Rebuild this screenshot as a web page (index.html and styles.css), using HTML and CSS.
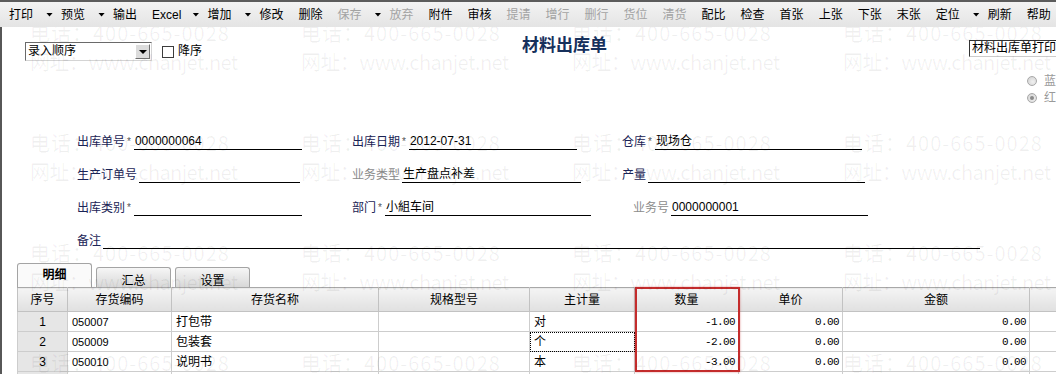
FILE: index.html
```html
<!DOCTYPE html>
<html lang="zh-CN">
<head>
    <meta charset="UTF-8">
    <title>材料出库单</title>
    <link rel="stylesheet" href="styles.css">
</head>
<body>
    <div class="toolbar">
        <span class="tb dd">打印<i class="caret"></i></span>
        <span class="tb dd">预览<i class="caret"></i></span>
        <span class="tb">输出</span>
        <span class="tb dd xl">Excel<i class="caret"></i></span>
        <span class="tb dd">增加<i class="caret"></i></span>
        <span class="tb">修改</span>
        <span class="tb">删除</span>
        <span class="tb dd off">保存<i class="caret"></i></span>
        <span class="tb off">放弃</span>
        <span class="tb">附件</span>
        <span class="tb">审核</span>
        <span class="tb off">提请</span>
        <span class="tb off">增行</span>
        <span class="tb off">删行</span>
        <span class="tb off">货位</span>
        <span class="tb off">清货</span>
        <span class="tb">配比</span>
        <span class="tb">检查</span>
        <span class="tb">首张</span>
        <span class="tb">上张</span>
        <span class="tb">下张</span>
        <span class="tb">末张</span>
        <span class="tb dd">定位<i class="caret"></i></span>
        <span class="tb">刷新</span>
        <span class="tb">帮助</span>
    </div>

    <div class="page">
        <div class="head">
            <div class="sort">
                <div class="select">
                    <span>录入顺序</span>
                    <span class="select-btn"></span>
                </div>
                <span class="chk"></span>
                <span class="chk-label">降序</span>
            </div>
            <h1 class="title">材料出库单</h1>
            <div class="print-box">材料出库单打印</div>
        </div>

        <div class="colors">
            <div class="opt"><span class="radio"></span>蓝</div>
            <div class="opt"><span class="radio on"></span>红</div>
        </div>

        <div class="form">
            <div class="row">
                <div class="field">
                    <span class="lbl">出库单号</span><span class="req">*</span>
                    <span class="val w168">0000000064</span>
                </div>
                <div class="field">
                    <span class="lbl">出库日期</span><span class="req">*</span>
                    <span class="val w168">2012-07-31</span>
                </div>
                <div class="field">
                    <span class="lbl">仓库</span><span class="req">*</span>
                    <span class="val w207">现场仓</span>
                </div>
            </div>
            <div class="row">
                <div class="field">
                    <span class="lbl">生产订单号</span>
                    <span class="val w161"></span>
                </div>
                <div class="field">
                    <span class="lbl dim">业务类型</span>
                    <span class="val w179">生产盘点补差</span>
                </div>
                <div class="field">
                    <span class="lbl">产量</span>
                    <span class="val w217"></span>
                </div>
            </div>
            <div class="row">
                <div class="field">
                    <span class="lbl">出库类别</span><span class="req">*</span>
                    <span class="val w168"></span>
                </div>
                <div class="field">
                    <span class="lbl">部门</span><span class="req">*</span>
                    <span class="val w206">小組车间</span>
                </div>
                <div class="field shift">
                    <span class="lbl dim">业务号</span>
                    <span class="val w197">0000000001</span>
                </div>
            </div>
            <div class="row">
                <div class="field wide">
                    <span class="lbl">备注</span>
                    <span class="val w877"></span>
                </div>
            </div>
        </div>

        <div class="tabs">
            <span class="tab active">明细</span>
            <span class="tab">汇总</span>
            <span class="tab">设置</span>
        </div>

        <div class="grid-wrap">
            <table class="grid">
                <colgroup>
                    <col class="c-no">
                    <col class="c-code">
                    <col class="c-name">
                    <col class="c-spec">
                    <col class="c-unit">
                    <col class="c-qty">
                    <col class="c-price">
                    <col class="c-amount">
                    <col class="c-rest">
                </colgroup>
                <thead>
                    <tr>
                        <th>序号</th>
                        <th>存货编码</th>
                        <th>存货名称</th>
                        <th>规格型号</th>
                        <th>主计量</th>
                        <th>数量</th>
                        <th>单价</th>
                        <th>金额</th>
                        <th></th>
                    </tr>
                </thead>
                <tbody>
                    <tr>
                        <td class="no">1</td>
                        <td class="code">050007</td>
                        <td>打包带</td>
                        <td></td>
                        <td>对</td>
                        <td class="num">-1.00</td>
                        <td class="num">0.00</td>
                        <td class="num">0.00</td>
                        <td></td>
                    </tr>
                    <tr>
                        <td class="no">2</td>
                        <td class="code">050009</td>
                        <td>包装套</td>
                        <td></td>
                        <td class="focus">个</td>
                        <td class="num">-2.00</td>
                        <td class="num">0.00</td>
                        <td class="num">0.00</td>
                        <td></td>
                    </tr>
                    <tr>
                        <td class="no">3</td>
                        <td class="code">050010</td>
                        <td>说明书</td>
                        <td></td>
                        <td>本</td>
                        <td class="num">-3.00</td>
                        <td class="num">0.00</td>
                        <td class="num">0.00</td>
                        <td></td>
                    </tr>
                    <tr>
                        <td class="no"></td>
                        <td></td><td></td><td></td><td></td><td></td><td></td><td></td><td></td>
                    </tr>
                </tbody>
            </table>
            <div class="mark"></div>
        </div>

        <div class="watermark">
            <div class="wm"><div class="tel">电话：400-665-0028</div><div class="web">网址：www.chanjet.net</div></div>
            <div class="wm"><div class="tel">电话：400-665-0028</div><div class="web">网址：www.chanjet.net</div></div>
            <div class="wm"><div class="tel">电话：400-665-0028</div><div class="web">网址：www.chanjet.net</div></div>
            <div class="wm"><div class="tel">电话：400-665-0028</div><div class="web">网址：www.chanjet.net</div></div>
            <div class="wm"><div class="tel">电话：400-665-0028</div><div class="web">网址：www.chanjet.net</div></div>
            <div class="wm"><div class="tel">电话：400-665-0028</div><div class="web">网址：www.chanjet.net</div></div>
            <div class="wm"><div class="tel">电话：400-665-0028</div><div class="web">网址：www.chanjet.net</div></div>
            <div class="wm"><div class="tel">电话：400-665-0028</div><div class="web">网址：www.chanjet.net</div></div>
            <div class="wm"><div class="tel">电话：400-665-0028</div><div class="web">网址：www.chanjet.net</div></div>
            <div class="wm"><div class="tel">电话：400-665-0028</div><div class="web">网址：www.chanjet.net</div></div>
            <div class="wm"><div class="tel">电话：400-665-0028</div><div class="web">网址：www.chanjet.net</div></div>
            <div class="wm"><div class="tel">电话：400-665-0028</div><div class="web">网址：www.chanjet.net</div></div>
            <div class="wm"><div class="tel">电话：400-665-0028</div><div class="web">网址：www.chanjet.net</div></div>
            <div class="wm"><div class="tel">电话：400-665-0028</div><div class="web">网址：www.chanjet.net</div></div>
            <div class="wm"><div class="tel">电话：400-665-0028</div><div class="web">网址：www.chanjet.net</div></div>
            <div class="wm"><div class="tel">电话：400-665-0028</div><div class="web">网址：www.chanjet.net</div></div>
        </div>
    </div>
</body>
</html>
```

FILE: styles.css
```css
* {
    box-sizing: border-box;
}
html, body {
    margin: 0;
    padding: 0;
    overflow: hidden;
}
body {
    width: 1056px;
    height: 374px;
    font-family: "Liberation Sans", "Noto Sans CJK SC", sans-serif;
    font-size: 12px;
    color: #000;
    background: #fff;
}

/* toolbar */
.toolbar {
    display: flex;
    align-items: center;
    height: 27px;
    padding-left: 2px;
    border-top: 2px solid #5c5c5c;
    background: linear-gradient(#f3f3f3, #e4e4e4);
    white-space: nowrap;
    position: relative;
    z-index: 10;
}
.tb {
    display: flex;
    align-items: center;
    flex-shrink: 0;
    height: 23px;
    padding: 0 8px 0 7px;
    line-height: 14px;
    color: #000;
}
.tb.dd {
    padding-right: 1px;
}
.tb.off {
    color: #a3a3a3;
}
.caret {
    display: inline-block;
    margin-left: 13px;
    width: 7px;
    height: 4px;
    background: #000;
    clip-path: polygon(0 0, 100% 0, 50% 100%);
}
.tb.xl .caret {
    margin-left: 11px;
}

/* page */
.page {
    position: relative;
    height: 347px;
    border-left: 2px solid #575757;
    overflow: hidden;
    background: #fff;
}
.head {
    display: flex;
    align-items: flex-start;
    padding-top: 7px;
}
.sort {
    display: flex;
    align-items: center;
    width: 497px;
    margin: 8px 0 0 23px;
}
.select {
    display: flex;
    align-items: center;
    width: 127px;
    height: 19px;
    padding-left: 2px;
    border: 1px solid;
    border-color: #6a6a6a #d4d4d4 #d4d4d4 #6a6a6a;
    line-height: 15px;
}
.select-btn {
    position: relative;
    margin-left: auto;
    margin-right: 1px;
    width: 15px;
    height: 15px;
    background: #dcdcdc;
    border: 1px solid;
    border-color: #fff #707070 #707070 #fff;
}
.select-btn::after {
    content: "";
    position: absolute;
    left: 3px;
    top: 5px;
    border-left: 4px solid transparent;
    border-right: 4px solid transparent;
    border-top: 4px solid #000;
}
.chk {
    width: 12px;
    height: 12px;
    margin-left: 10px;
    border: 1px solid #3c3c3c;
    background: #fff;
}
.chk-label {
    margin-left: 4px;
    line-height: 15px;
}
.title {
    margin: 0;
    font-family: "Noto Sans CJK SC", sans-serif;
    font-size: 17px;
    line-height: 20px;
    font-weight: bold;
    color: #16305c;
}
.print-box {
    margin: 6px -13px 0 auto;
    width: 100px;
    height: 17px;
    padding-left: 2px;
    line-height: 15px;
    border: 1px solid;
    border-color: #333 #ccc #ccc #333;
    white-space: nowrap;
    overflow: hidden;
}

.colors {
    display: flex;
    flex-direction: column;
    align-items: flex-end;
    margin-top: 11px;
}
.opt {
    display: flex;
    align-items: center;
    gap: 7px;
    height: 17px;
    color: #9a9a9a;
    line-height: 14px;
}
.radio {
    position: relative;
    width: 10px;
    height: 10px;
    border-radius: 50%;
    border: 1px solid #a8a8a8;
    background: radial-gradient(circle at 60% 60%, #f0f0f0, #cfcfcf);
}
.radio.on::after {
    content: "";
    position: absolute;
    left: 2px;
    top: 2px;
    width: 4px;
    height: 4px;
    border-radius: 50%;
    background: #8a8a8a;
}

/* form */
.form {
    margin: 11px 0 0 75px;
}
.row {
    display: grid;
    grid-template-columns: 275px 270px auto;
    align-items: end;
    height: 33px;
}
.field {
    display: flex;
    align-items: flex-end;
    white-space: nowrap;
}
.field.shift {
    margin-left: 11px;
}
.field.wide {
    grid-column: 1 / 4;
}
.lbl {
    line-height: 15px;
    color: #1b2456;
}
.lbl.dim {
    color: #8c8c8c;
}
.req {
    margin: 0 3px 0 2px;
    font-size: 10px;
    line-height: 10px;
    color: #555;
    align-self: center;
}
.val {
    display: inline-block;
    height: 16px;
    margin-left: 2px;
    padding-left: 1px;
    line-height: 15px;
    border-bottom: 1px solid #000;
}
.req + .val {
    margin-left: 0;
}
.w161 { width: 161px; }
.w168 { width: 168px; }
.w179 { width: 179px; }
.w197 { width: 197px; }
.w206 { width: 206px; }
.w207 { width: 207px; }
.w217 { width: 217px; }
.w877 { width: 877px; }

/* tabs */
.tabs {
    display: flex;
    align-items: flex-end;
    gap: 4px;
    height: 24px;
    margin: 14px 0 0 15px;
}
.tab {
    width: 75px;
    height: 20px;
    padding-top: 6px;
    text-align: center;
    line-height: 14px;
    border: 1px solid #a4a4a4;
    border-bottom: none;
    border-radius: 3px 3px 0 0;
    background: linear-gradient(#f6f6f6, #d8d8d8);
}
.tab.active {
    height: 24px;
    padding-top: 4px;
    font-weight: bold;
    background: #fafafa;
}

/* grid */
.grid-wrap {
    position: relative;
    margin-left: 15px;
}
.grid {
    width: 1052px;
    table-layout: fixed;
    border-collapse: collapse;
}
.c-no { width: 50px; }
.c-code { width: 104px; }
.c-name { width: 207px; }
.c-spec { width: 151px; }
.c-unit { width: 105px; }
.c-qty { width: 104px; }
.c-price { width: 104px; }
.c-amount { width: 187px; }
.c-rest { width: 40px; }
.grid th {
    height: 24px;
    padding: 0;
    font-weight: normal;
    line-height: 14px;
    border: 1px solid #c2c2c2;
    border-top-color: #a8a8a8;
    background: linear-gradient(#f4f4f4, #e0e0e0);
}
.grid td {
    height: 20px;
    padding: 0 4px;
    line-height: 14px;
    white-space: nowrap;
    border: 1px solid #cdcdcd;
    background: #fff;
}
.grid td.no {
    text-align: center;
    background: #e6e6e6;
}
.grid td.code {
    font-size: 11px;
}
.grid td.num {
    text-align: right;
    padding-right: 3px;
    font-family: "Liberation Mono", monospace;
    font-size: 11px;
    letter-spacing: -0.6px;
}
.grid td.focus {
    outline: 1px dotted #000;
    outline-offset: -1px;
}
.mark {
    position: absolute;
    left: 618px;
    top: 0;
    width: 105px;
    height: 85px;
    border: 2px solid #c42c2c;
    box-shadow: 0 0 2px rgba(196, 44, 44, 0.5);
    pointer-events: none;
}

/* watermark */
.watermark {
    position: absolute;
    left: 28px;
    top: -9px;
    display: grid;
    grid-template-columns: repeat(4, 271px);
    grid-auto-rows: 110px;
    pointer-events: none;
    z-index: 5;
}
.wm {
    font-family: "Noto Sans CJK SC", sans-serif;
    font-size: 20px;
    line-height: 29px;
    white-space: nowrap;
    color: rgba(0, 0, 0, 0.06);
}
.wm .tel {
    letter-spacing: 1px;
}
.wm .web {
    letter-spacing: -0.6px;
}
```
